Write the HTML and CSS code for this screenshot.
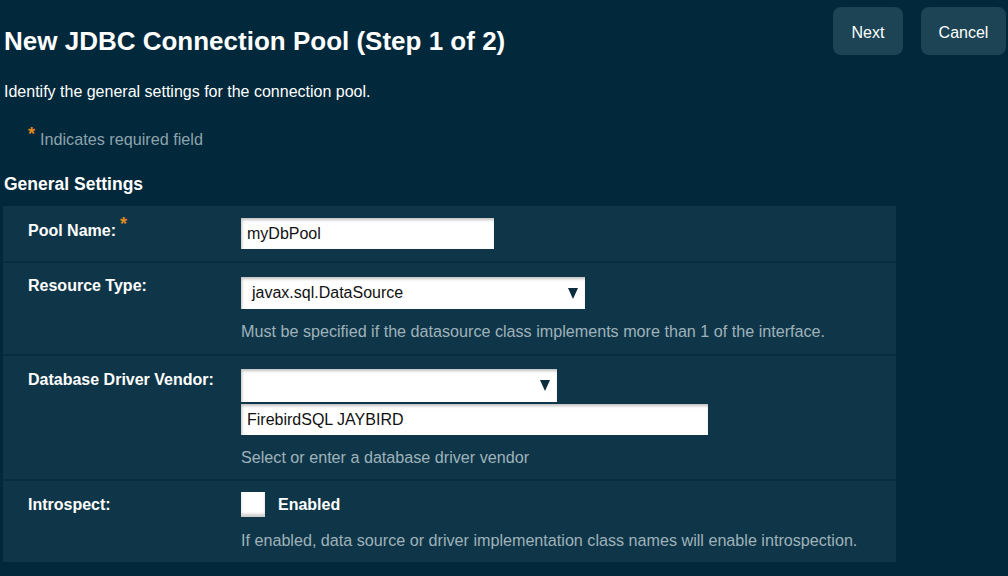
FILE: index.html
```html
<!DOCTYPE html>
<html>
<head>
<meta charset="utf-8">
<link rel="stylesheet" href="styles.css">
</head>
<body>
<div class="page">
  <div class="header">
    <h1 class="title">New JDBC Connection Pool (Step 1 of 2)</h1>
    <div class="actions">
      <button class="btn btn-next">Next</button>
      <button class="btn btn-cancel">Cancel</button>
    </div>
  </div>
  <p class="intro">Identify the general settings for the connection pool.</p>
  <p class="required"><span class="star">*</span>Indicates required field</p>
  <h2 class="section">General Settings</h2>
  <div class="panel">
    <div class="row row-pool">
      <div class="label">Pool Name:<span class="star star-label">*</span></div>
      <div class="field">
        <div class="input input-pool">myDbPool</div>
      </div>
    </div>
    <div class="row row-type">
      <div class="label">Resource Type:</div>
      <div class="field">
        <div class="input select select-type">javax.sql.DataSource<span class="arrow"></span></div>
        <div class="help">Must be specified if the datasource class implements more than 1 of the interface.</div>
      </div>
    </div>
    <div class="row row-vendor">
      <div class="label">Database Driver Vendor:</div>
      <div class="field">
        <div class="input select select-vendor"><span class="arrow"></span></div>
        <div class="input input-vendor">FirebirdSQL JAYBIRD</div>
        <div class="help">Select or enter a database driver vendor</div>
      </div>
    </div>
    <div class="row row-intro">
      <div class="label">Introspect:</div>
      <div class="field">
        <div class="check-line"><span class="checkbox"></span><span class="check-label">Enabled</span></div>
        <div class="help">If enabled, data source or driver implementation class names will enable introspection.</div>
      </div>
    </div>
  </div>
</div>
</body>
</html>
```
FILE: styles.css
```css
html, body {
  margin: 0;
  padding: 0;
  background: #01283b;
  font-family: "Liberation Sans", Arial, sans-serif;
  color: #ffffff;
}
.page {
  width: 1008px;
  height: 576px;
  overflow: hidden;
}
.header {
  display: flex;
  justify-content: space-between;
  align-items: flex-start;
}
.title {
  margin: 27px 0 0 4px;
  font-size: 26px;
  font-weight: bold;
  line-height: 28px;
}
.actions {
  display: flex;
  gap: 18px;
  padding: 7px 2px 0 0;
}
.btn {
  background: #1c4454;
  color: #ffffff;
  border: none;
  border-radius: 8px;
  height: 48px;
  font-family: "Liberation Sans", Arial, sans-serif;
  font-size: 16px;
  padding: 3px 0 0 0;
}
.btn-next { width: 70px; }
.btn-cancel { width: 85px; }
.intro {
  margin: 27px 0 0 4px;
  font-size: 16px;
  line-height: 19px;
}
.required {
  margin: 28px 0 0 28px;
  font-size: 16.2px;
  color: #8ea3ad;
  line-height: 20px;
}
.star {
  color: #e08a1e;
  font-weight: bold;
  font-size: 18px;
  position: relative;
  top: -5px;
  margin-right: 5px;
}
.section {
  margin: 25px 0 0 4px;
  font-size: 17.5px;
  font-weight: bold;
  line-height: 20px;
}
.panel {
  margin: 12px 0 0 3px;
  width: 893px;
  background: #072d3f;
  display: flex;
  flex-direction: column;
  gap: 2px;
}
.row {
  background: #0f3648;
  display: flex;
  align-items: flex-start;
}
.label {
  width: 213px;
  padding-left: 25px;
  font-size: 16px;
  font-weight: bold;
  line-height: 18px;
  flex: none;
}
.star-label {
  font-size: 18px;
  margin-left: 4px;
  margin-right: 0;
  top: -6px;
}
.field {
  display: flex;
  flex-direction: column;
  align-items: flex-start;
}
.input {
  background: #ffffff;
  color: #111111;
  box-shadow: inset 1px 2px 3px rgba(0,0,0,0.25);
  font-size: 16px;
  box-sizing: border-box;
  display: flex;
  align-items: center;
  padding-left: 6px;
  position: relative;
}
.row-pool { height: 55px; }
.row-pool .label { margin-top: 15px; }
.row-pool .field { margin-top: 12px; }
.input-pool { width: 253px; height: 31px; }
.row-type { height: 91px; }
.row-type .label { margin-top: 14px; }
.row-type .field { margin-top: 14px; }
.select-type { width: 344px; height: 32px; padding-left: 11px; }
.arrow {
  position: absolute;
  right: 7px;
  top: 11px;
  width: 0;
  height: 0;
  border-left: 5px solid transparent;
  border-right: 5px solid transparent;
  border-top: 11px solid #0c2d3d;
}
.help {
  color: #9fb2bb;
  font-size: 16.15px;
  line-height: 18px;
  margin-top: 13px;
}
.row-vendor { height: 123px; }
.row-vendor .label { margin-top: 15px; }
.row-vendor .field { margin-top: 13px; }
.select-vendor { width: 316px; height: 33px; }
.input-vendor { width: 467px; height: 31px; margin-top: 2px; }
.row-vendor .help { margin-top: 13px; }
.row-intro { height: 81px; }
.row-intro .label { margin-top: 15px; }
.row-intro .field { margin-top: 11px; }
.check-line { display: flex; align-items: center; }
.checkbox {
  width: 24px;
  height: 25px;
  background: #ffffff;
  box-shadow: inset 0 -3px 3px rgba(0,0,0,0.2);
  display: inline-block;
}
.check-label {
  margin-left: 13px;
  font-size: 16px;
  font-weight: bold;
}
.row-intro .help { margin-top: 14px; }
```
